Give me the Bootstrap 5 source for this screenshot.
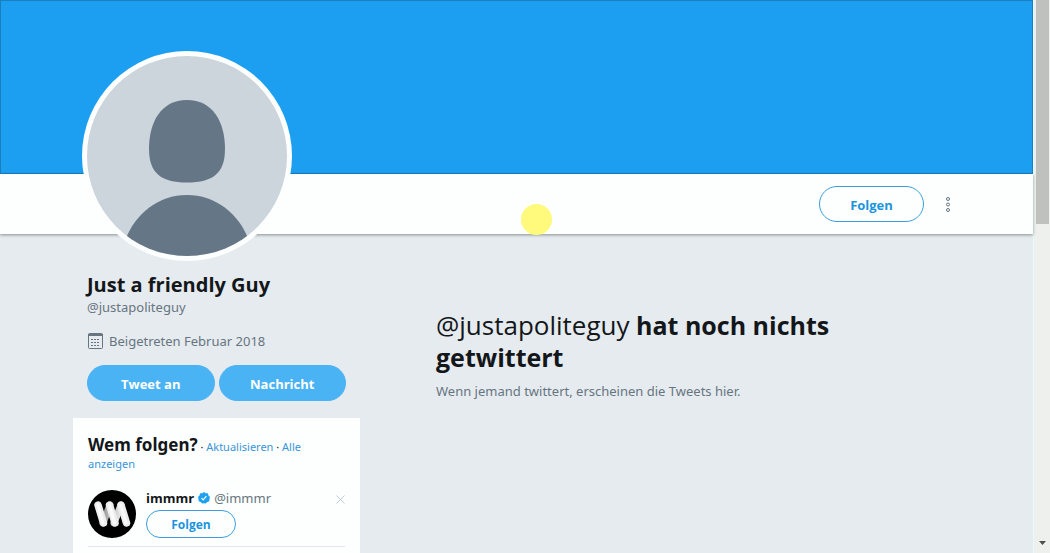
<!DOCTYPE html>
<html lang="de">
<head>
<meta charset="utf-8">
<meta name="viewport" content="width=device-width, initial-scale=1">
<title>Just a friendly Guy (@justapoliteguy)</title>
<link href="https://cdn.jsdelivr.net/npm/bootstrap@5.3.0/dist/css/bootstrap.min.css" rel="stylesheet">
<style>
  body { font-family: "Noto Sans", "Open Sans", sans-serif; font-size: 13px; line-height: 20px; color: #14171a; background: #e6ebef; }
  a { color: #3b94d9; text-decoration: none; }
  .muted { color: #66757f; }
  .wrap { max-width: 887px; }
  .banner { height: 174px; background: #1c9ff0; border: 1px solid #1a7fc0; }
  .profile-bar { height: 60px; background: #fcfffd; box-shadow: 0 1px 3px rgba(0,0,0,.4); }
  .avatar { width: 210px; left: 9px; bottom: -27px; }
  .pill, .full-name, .timeline h1, .account b { font-family: "Open Sans", "Noto Sans", sans-serif; }
  .pill { border-radius: 100px; font-size: 13px; font-weight: 700; line-height: 20px; padding: 8px 8px 6px; }
  .pill-outline { color: #1c94e0; border: 1px solid #3b9ddd; background: #fcfffd; }
  .pill-outline:hover { background: #e8f5fd; color: #1c94e0; border-color: #3b9ddd; }
  .pill-fill, .pill-fill:hover { color: #fff; background: #4ab3f4; border-color: #4ab3f4; }
  .pill-wide { width: 105px; }
  .pill-small { width: 90px; font-size: 12px; padding: 4px 8px 2px; }
  .more { line-height: 0; width: 16px; }
  .side { width: 287px; }
  .profile-info { padding: 39px 14px 17px; }
  .full-name { font-size: 20px; line-height: 24px; }
  .joined { gap: 5px; margin: 14px 0; }
  .suggestions { background: #fcfffd; padding: 17px 15px; }
  .suggestions h2 { font-size: 17px; line-height: 20px; }
  .tiny { font-size: 11px; line-height: 17px; margin-bottom: 18px; }
  .account { padding-bottom: 8px; border-bottom: 1px solid #e1e8ed; }
  .account-pic { width: 48px; height: 48px; }
  .account-body { padding-left: 10px; line-height: 16px; }
  .timeline { padding: 75px 110px 0 76px; }
  .timeline h1 { font-size: 25px; line-height: 32px; }
  .timeline h1 span { font-size: 26px; }
  .scroll-track { width: 17px; background: #eef0ee; border-left: 1px solid #e6fafa; }
  .scroll-thumb { width: 13px; height: 224px; background: #bfc1be; }
  .pointer { width: 31px; height: 31px; background: #fffa7b; left: 521px; top: 30px; }
</style>
</head>
<body>
<div class="d-flex vh-100 overflow-hidden">
  <div class="flex-grow-1">
    <div class="banner"></div>
    <header class="profile-bar position-relative">
      <div class="wrap mx-auto h-100 position-relative d-flex align-items-center justify-content-end">
        <svg class="avatar position-absolute" viewBox="0 0 210 210" role="img" aria-label="Profilbild">
          <defs><clipPath id="face"><circle cx="105" cy="105" r="100"/></clipPath></defs>
          <circle cx="105" cy="105" r="105" fill="#fcfffd"/>
          <circle cx="105" cy="105" r="100" fill="#ccd4dc"/>
          <g clip-path="url(#face)" fill="#657786">
            <path d="M105 49C79 49 67 71 67 98C67 122 79 131.500 105 131.500S143 122 143 98C143 71 131 49 105 49Z"/>
            <path d="M43 190C53 162 77 144 105 144S157 162 167 190V210H43Z"/>
          </g>
        </svg>
        <button type="button" class="btn pill pill-outline pill-wide">Folgen</button>
        <button type="button" class="btn more p-0 border-0 ms-3 me-1" aria-label="Mehr">
          <svg width="6" height="17" viewBox="0 0 6 17" fill="none" stroke="#66757f"><circle cx="3" cy="3" r="1.500"/><circle cx="3" cy="8.500" r="1.500"/><circle cx="3" cy="14" r="1.500"/></svg>
        </button>
      </div>
      <div class="pointer position-absolute rounded-circle"></div>
    </header>
    <main class="wrap mx-auto d-flex">
      <aside class="side flex-shrink-0">
        <section class="profile-info">
          <div class="full-name fw-bold">Just a friendly Guy</div>
          <a href="#" class="muted d-block">@justapoliteguy</a>
          <div class="joined muted d-flex align-items-center">
            <svg width="17" height="17" viewBox="0 0 17 17" fill="none" stroke="#66757f"><rect x="1.500" y=".5" width="14" height="15" rx="1"/><path d="M1 1.500H16M1 2.500H16"/><path stroke-dasharray="2 1" d="M4 6.500H13M4 9.500H13M4 12.500H13"/></svg>
            <span>Beigetreten Februar 2018</span>
          </div>
          <div class="d-flex gap-1">
            <button type="button" class="btn pill pill-fill flex-fill w-50">Tweet an</button>
            <button type="button" class="btn pill pill-fill flex-fill w-50">Nachricht</button>
          </div>
        </section>
        <section class="suggestions">
          <div class="tiny">
            <h2 class="d-inline fw-bold">Wem folgen?</h2> ·
            <a href="#">Aktualisieren</a> ·
            <a href="#">Alle anzeigen</a>
          </div>
          <div class="account d-flex">
            <svg class="account-pic flex-shrink-0" viewBox="0 0 48 48" role="img" aria-label="immmr">
              <defs>
                <linearGradient id="fold" x1="0" x2="1"><stop offset="0" stop-color="#999"/><stop offset="1" stop-color="#e8e8e8"/></linearGradient>
              </defs>
              <circle cx="24" cy="24" r="24"/>
              <g fill="none" stroke-linecap="round">
                <path d="M15 33L22 15M26 33L33 15" stroke="url(#fold)" stroke-width="7"/>
                <path d="M10 15L15.500 33M21.500 15L27 33M33 15L38.500 33" stroke="#ededed" stroke-width="7.500"/>
                <path d="M10 15L15 33M21.500 15L26.500 33M33 15L38 33" stroke="#fafafa" stroke-width="3"/>
              </g>
            </svg>
            <div class="account-body flex-grow-1">
              <div class="d-flex align-items-center mb-1">
                <b>immmr</b>
                <svg class="mx-1" width="12" height="12" viewBox="0 0 12 12"><path fill="#1da1f2" d="M6 0L7.700 1.200L9.800 1.300L10.500 3.400L12 5L11.500 7L11.300 9.200L9.300 10L7.800 11.600L6 11.200L4.200 11.600L2.700 10L.7 9.200L.5 7L0 5L1.500 3.400L2.200 1.300L4.300 1.200Z"/><path d="M3.500 6.200L5.200 7.900L8.400 4.200" fill="none" stroke="#fff" stroke-width="1.200"/></svg>
                <a href="#" class="muted">@immmr</a>
                <button type="button" class="btn p-0 border-0 ms-auto lh-1" aria-label="Ausblenden"><svg width="9" height="9" viewBox="0 0 9 9" stroke="#c3ccd2"><path d="M.5 .5L8.500 8.500M8.500 .5L.5 8.500"/></svg></button>
              </div>
              <button type="button" class="btn pill pill-outline pill-small">Folgen</button>
            </div>
          </div>
        </section>
      </aside>
      <section class="timeline flex-grow-1">
        <h1 class="fw-bold mb-2"><span class="fw-normal">@justapoliteguy</span> hat noch nichts getwittert</h1>
        <p class="muted mb-0">Wenn jemand twittert, erscheinen die Tweets hier.</p>
      </section>
    </main>
  </div>
  <div class="scroll-track flex-shrink-0 d-flex flex-column justify-content-between align-items-center" aria-hidden="true">
    <div class="scroll-thumb"></div>
    <svg class="mb-2" width="7" height="4" viewBox="0 0 7 4" fill="#4b504c"><path d="M0 0H7L3.500 4Z"/></svg>
  </div>
</div>
<script src="https://cdn.jsdelivr.net/npm/bootstrap@5.3.0/dist/js/bootstrap.bundle.min.js"></script>
</body>
</html>
